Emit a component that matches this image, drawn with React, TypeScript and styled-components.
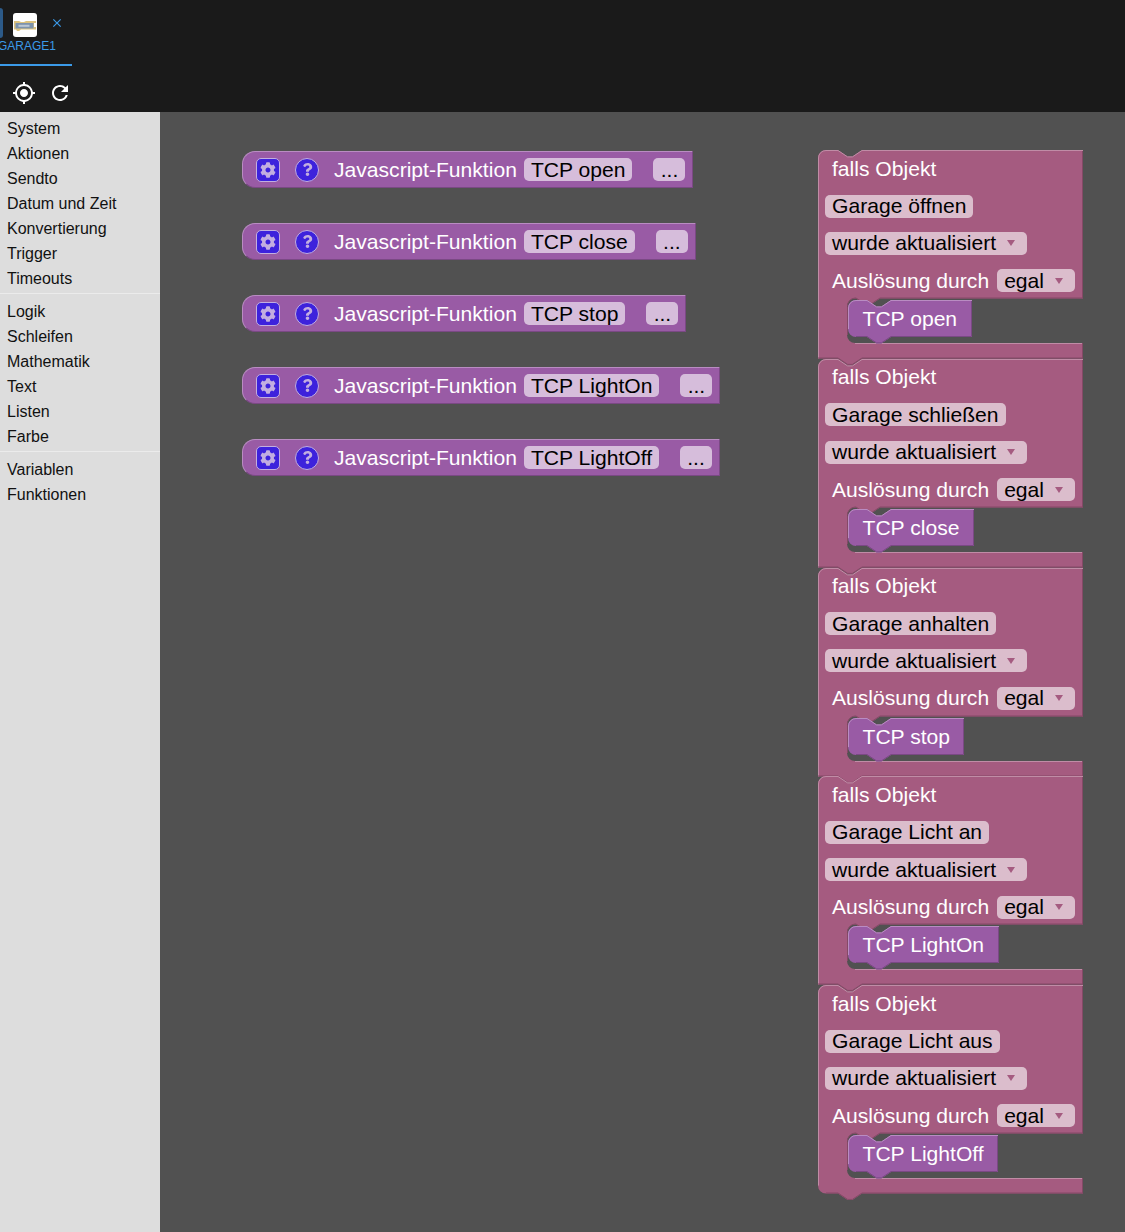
import React from "react";
import styled, { createGlobalStyle } from "styled-components";
import { MdClose, MdGpsFixed, MdRefresh } from "react-icons/md";
import { FaCog, FaQuestion } from "react-icons/fa";

const COLORS = {
  top: "#1a1a1a",
  blue: "#3b9ae8",
  side: "#dddddd",
  sideLine: "#ebebeb",
  work: "#515151",
  fn: "#995ba5",
  fnLight: "#b98cc2",
  fnDark: "#7a4984",
  fnField: "#d6bddb",
  tr: "#a55b80",
  trLight: "#c08ca6",
  trDark: "#844966",
  trField: "#dbbdcc",
  icon: "#3d22dc",
  iconLine: "#c2aee0",
};

const BLOCK_FONT = `"Liberation Sans", Arial, sans-serif`;

const Global = createGlobalStyle`
  html, body { margin: 0; height: 100%; overflow: hidden; background: ${COLORS.work}; }
  #root { height: 100%; }
  * { box-sizing: border-box; }
`;

const Page = styled.div`
  display: flex;
  flex-direction: column;
  height: 100%;
  font-family: ${BLOCK_FONT};
`;

const Header = styled.header`
  background: ${COLORS.top};
  height: 112px;
  flex: none;
`;

const TabBar = styled.div`
  height: 66px;
  overflow: hidden;
`;

const Tab = styled.div`
  width: 72px;
  height: 66px;
  border-bottom: 2px solid ${COLORS.blue};
  color: ${COLORS.blue};
`;

const TabIcons = styled.div`
  display: flex;
  align-items: flex-start;
  padding-top: 8px;
  height: 39px;
`;

const PrevTabSliver = styled.div`
  width: 3px;
  height: 30px;
  border-radius: 0 5px 5px 0;
  background: #2c5a88;
`;

const TabLogo = styled.svg`
  width: 24px;
  height: 24px;
  margin: 5px 0 0 10px;
`;

const TabClose = styled(MdClose)`
  width: 14px;
  height: 14px;
  margin: 8px 0 0 13px;
`;

const TabLabel = styled.div`
  font-size: 12px;
  line-height: 14px;
  margin-left: -2px;
  white-space: nowrap;
`;

const Toolbar = styled.div`
  display: flex;
  gap: 12px;
  padding: 15px 12px 0;
  color: #ffffff;
`;

const ToolIcon = styled.span`
  display: block;
  width: 24px;
  height: 24px;
  font-size: 24px;
  line-height: 0;
`;

const Main = styled.main`
  flex: 1;
  display: flex;
  min-height: 0;
`;

const Sidebar = styled.nav`
  width: 160px;
  flex: none;
  background: ${COLORS.side};
  padding-top: 4px;
`;

const SideItem = styled.div`
  height: 25px;
  line-height: 25px;
  padding-left: 7px;
  font-size: 16px;
  color: #111111;
`;

const SideLine = styled.div`
  height: 1px;
  margin: 2px 0 5px;
  background: ${COLORS.sideLine};
`;

const Workspace = styled.div`
  flex: 1;
  display: flex;
  align-items: flex-start;
  background: ${COLORS.work};
  padding: 38px 0 0 82px;
  min-width: 0;
`;

const FunctionColumn = styled.div`
  width: 576px;
  flex: none;
  padding-top: 1px;
  display: flex;
  flex-direction: column;
  align-items: flex-start;
  gap: 35px;
`;

const FunctionBlock = styled.div`
  display: flex;
  align-items: center;
  height: 37px;
  padding: 0 7px 0 13px;
  background: ${COLORS.fn};
  border-radius: 13px 0 0 13px;
  border-top: 1px solid ${COLORS.fnLight};
  border-left: 1px solid ${COLORS.fnLight};
  border-bottom: 1px solid ${COLORS.fnDark};
  border-right: 1px solid ${COLORS.fnDark};
  font-size: 21.1px;
  color: #ffffff;
  white-space: nowrap;
`;

const MutatorIcon = styled.span<{ $round?: boolean; $glyph: number }>`
  display: flex;
  align-items: center;
  justify-content: center;
  flex: none;
  width: 24px;
  height: 24px;
  margin-right: 15px;
  background: ${COLORS.icon};
  border: 1px solid ${COLORS.iconLine};
  border-radius: ${(p) => (p.$round ? "50%" : "5px")};
  color: ${COLORS.iconLine};
  font-size: ${(p) => p.$glyph}px;
`;

const FnLabel = styled.span`
  margin-right: 7px;
`;

const Field = styled.span<{ $tone: "fn" | "tr" }>`
  display: inline-flex;
  align-items: center;
  height: 23px;
  padding: 0 7px;
  border-radius: 5px;
  background: ${(p) => (p.$tone === "fn" ? COLORS.fnField : COLORS.trField)};
  color: #000000;
  font-size: 21.1px;
  white-space: nowrap;
`;

const DotsButton = styled(Field)`
  width: 32px;
  justify-content: center;
  margin-left: 21px;
  padding: 0;
`;

const TriggerColumn = styled.div`
  display: flex;
  flex-direction: column;
  width: 265px;
`;

const Trigger = styled.div`
  position: relative;
  height: 208.75px;
  font-size: 21.1px;
  color: #ffffff;
`;

const TriggerShape = styled.svg`
  position: absolute;
  left: 0;
  top: 0;
  overflow: visible;
`;

const TriggerBody = styled.div`
  position: relative;
`;

const Row = styled.div`
  display: flex;
  align-items: center;
  height: 37.4px;
  padding-left: 7px;
  white-space: nowrap;
`;

const RowLabel = styled.span`
  padding: 0 8px 0 7px;
`;

const Arrow = styled.span`
  width: 0;
  height: 0;
  margin: 0 5.5px 0 10.5px;
  border-left: 4px solid transparent;
  border-right: 4px solid transparent;
  border-top: 6px solid ${COLORS.tr};
`;

const Nested = styled.div`
  position: relative;
  margin: 0.5px 0 0 30px;
  height: 37px;
  line-height: 37px;
  padding-left: 14.5px;
`;

const NestedShape = styled.svg`
  position: absolute;
  left: 0;
  top: 0;
  overflow: visible;
`;

const NestedText = styled.span`
  position: relative;
  white-space: nowrap;
`;

const notchDown = "l9.6,6.4 h4.8 l9.6,-6.4";
const notchUp = "l-9.6,6.4 h-4.8 l-9.6,-6.4";

function TriggerBackground({ last }: { last: boolean }) {
  const W = 265;
  const B = 208.5;
  const I = 148.5;
  const corner = last ? `H8 A8,8 0 0 1 0,${B - 8}` : "H0";
  const shape = `M0,8 A8,8 0 0 1 8,0 H20 ${notchDown} H${W} V${I} H62 ${notchUp} H37 A8,8 0 0 0 29,${I + 8} V185 A8,8 0 0 0 37,193 H${W} V${B} H44 ${notchUp} ${corner} Z`;
  return (
    <TriggerShape width={W} height={B + 7}>
      <path d={shape} fill={COLORS.tr} />
      <path
        d={`M0.5,${last ? B - 8 : B} V8 A7.5,7.5 0 0 1 8,0.5 H20 ${notchDown} H${W}`}
        fill="none"
        stroke={COLORS.trLight}
      />
      <path d={`M37,193.5 H${W}`} fill="none" stroke={COLORS.trLight} />
      <path
        d={`M${W - 0.5},1 V${I} M${W},${I - 0.5} H62 ${notchUp} H37 A8,8 0 0 0 29.5,${I + 8} V185 M${W - 0.5},193 V${B} M${W},${B - 0.5} H44 ${notchUp} ${last ? "H8" : "H0"}`}
        fill="none"
        stroke={COLORS.trDark}
      />
    </TriggerShape>
  );
}

function NestedBackground({ width }: { width: number }) {
  const shape = `M0,8 A8,8 0 0 1 8,0 H19 ${notchDown} H${width} V37 H43 ${notchUp} H8 A8,8 0 0 1 0,29 Z`;
  return (
    <NestedShape width={width} height={44}>
      <path d={shape} fill={COLORS.fn} />
      <path
        d={`M0.5,29 V8 A7.5,7.5 0 0 1 8,0.5 H19 ${notchDown} H${width}`}
        fill="none"
        stroke={COLORS.fnLight}
      />
      <path
        d={`M${width - 0.5},1 V36.5 H43 ${notchUp} H8`}
        fill="none"
        stroke={COLORS.fnDark}
      />
    </NestedShape>
  );
}

const functions = ["TCP open", "TCP close", "TCP stop", "TCP LightOn", "TCP LightOff"];

const triggers = [
  { name: "Garage öffnen", call: "TCP open", width: 124 },
  { name: "Garage schließen", call: "TCP close", width: 126 },
  { name: "Garage anhalten", call: "TCP stop", width: 116 },
  { name: "Garage Licht an", call: "TCP LightOn", width: 151 },
  { name: "Garage Licht aus", call: "TCP LightOff", width: 150 },
];

const sideGroups = [
  ["System", "Aktionen", "Sendto", "Datum und Zeit", "Konvertierung", "Trigger", "Timeouts"],
  ["Logik", "Schleifen", "Mathematik", "Text", "Listen", "Farbe"],
  ["Variablen", "Funktionen"],
];

export default function App() {
  return (
    <Page>
      <Global />
      <Header>
        <TabBar>
          <Tab>
            <TabIcons>
              <PrevTabSliver />
              <TabLogo viewBox="0 0 24 24">
                <rect width="24" height="24" rx="3" fill="#ffffff" />
                <path d="M1,8 H6 l2,1 h3 l2,-1 H23 V10 H21 V14 H23 V16.5 H8 l-2,1.5 h-2 l-1,-1.5 H1 Z" fill="#dcc27e" />
                <rect x="2.5" y="10" width="18" height="5.5" fill="#7d93ac" />
                <rect x="5.5" y="11.8" width="11" height="2" fill="#bcc8d5" />
              </TabLogo>
              <TabClose />
            </TabIcons>
            <TabLabel>GARAGE1</TabLabel>
          </Tab>
        </TabBar>
        <Toolbar>
          <ToolIcon>
            <MdGpsFixed />
          </ToolIcon>
          <ToolIcon>
            <MdRefresh />
          </ToolIcon>
        </Toolbar>
      </Header>
      <Main>
        <Sidebar>
          {sideGroups.map((group, i) => (
            <React.Fragment key={i}>
              {i > 0 && <SideLine />}
              {group.map((item) => (
                <SideItem key={item}>{item}</SideItem>
              ))}
            </React.Fragment>
          ))}
        </Sidebar>
        <Workspace>
          <FunctionColumn>
            {functions.map((fn) => (
              <FunctionBlock key={fn}>
                <MutatorIcon $glyph={16}>
                  <FaCog />
                </MutatorIcon>
                <MutatorIcon $round $glyph={13}>
                  <FaQuestion />
                </MutatorIcon>
                <FnLabel>Javascript-Funktion</FnLabel>
                <Field $tone="fn">{fn}</Field>
                <DotsButton $tone="fn">...</DotsButton>
              </FunctionBlock>
            ))}
          </FunctionColumn>
          <TriggerColumn>
            {triggers.map((t, i) => (
              <Trigger key={t.name}>
                <TriggerBackground last={i === triggers.length - 1} />
                <TriggerBody>
                  <Row>
                    <RowLabel>falls Objekt</RowLabel>
                  </Row>
                  <Row>
                    <Field $tone="tr">{t.name}</Field>
                  </Row>
                  <Row>
                    <Field $tone="tr">
                      wurde aktualisiert
                      <Arrow />
                    </Field>
                  </Row>
                  <Row>
                    <RowLabel>Auslösung durch</RowLabel>
                    <Field $tone="tr">
                      egal
                      <Arrow />
                    </Field>
                  </Row>
                  <Nested>
                    <NestedBackground width={t.width} />
                    <NestedText>{t.call}</NestedText>
                  </Nested>
                </TriggerBody>
              </Trigger>
            ))}
          </TriggerColumn>
        </Workspace>
      </Main>
    </Page>
  );
}
